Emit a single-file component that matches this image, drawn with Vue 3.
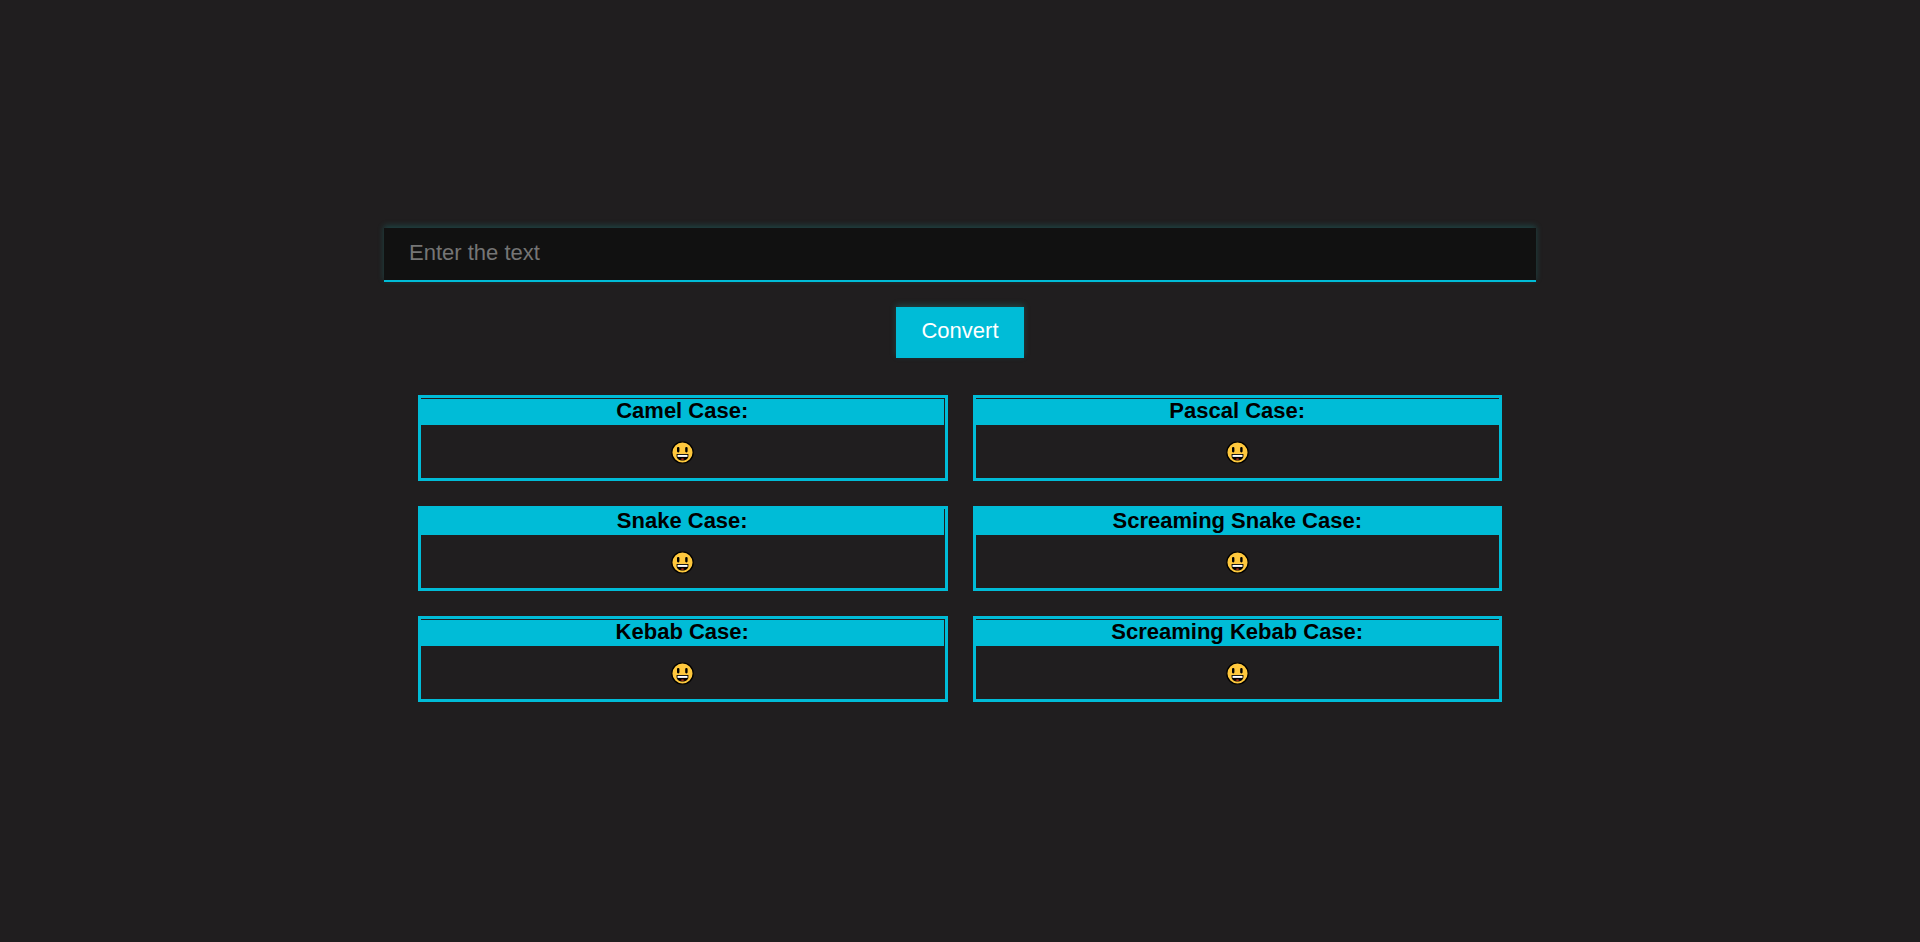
<script setup>
import { ref } from 'vue'

const text = ref('')
const words = ref([])

const cap = (w) => w.charAt(0).toUpperCase() + w.slice(1)
const pascal = (list) => list.map(cap).join('')

const cases = [
  { title: 'Camel Case:', format: (l) => l[0] + pascal(l.slice(1)) },
  { title: 'Pascal Case:', format: pascal },
  { title: 'Snake Case:', format: (l) => l.join('_') },
  { title: 'Screaming Snake Case:', format: (l) => l.join('_').toUpperCase() },
  { title: 'Kebab Case:', format: (l) => l.join('-') },
  { title: 'Screaming Kebab Case:', format: (l) => l.join('-').toUpperCase() }
]

function convert() {
  words.value = text.value.trim().toLowerCase().split(/\s+/).filter(Boolean)
}
</script>

<template>
  <main class="page">
    <form class="form" @submit.prevent="convert">
      <input v-model="text" class="field" type="text" placeholder="Enter the text" aria-label="Enter the text" />
      <button class="convert" type="submit">Convert</button>
    </form>
    <div class="cards">
      <section v-for="item in cases" :key="item.title" class="card">
        <h2 class="title">{{ item.title }}</h2>
        <div class="result">
          <span v-if="words.length">{{ item.format(words) }}</span>
          <svg v-else class="smiley" viewBox="0 0 23 23" role="img" aria-label="Smiley">
            <circle cx="11.5" cy="11.5" r="10.7" fill="#ffc83d" stroke="#000" stroke-width="1.3" />
            <rect x="6" y="6" width="2.4" height="5.4" rx="1.1" fill="#000" />
            <rect x="14.2" y="6" width="2.4" height="5.4" rx="1.1" fill="#000" />
            <path d="M5.6 13h11.8v2c0 2.600-2.300 4.500-5.900 4.500s-5.900-1.900-5.900-4.500z" fill="#000" />
            <path d="M6.500 13.900h10v2h-10z" fill="#fff" />
            <path d="M9.500 18.300c.6-1.200 3.400-1.200 4 0q-2 .7-4 0z" fill="#e83b22" />
          </svg>
        </div>
      </section>
    </div>
  </main>
</template>

<style>
body {
  background: #201e1f;
}
</style>

<style scoped>
.page {
  box-sizing: border-box;
  min-height: 100vh;
  padding-bottom: 12px;
  display: flex;
  flex-direction: column;
  align-items: center;
  justify-content: center;
  gap: 37px;
  font-family: "Liberation Sans", Arial, sans-serif;
  font-size: 22px;
}
.form {
  width: 60%;
  display: flex;
  flex-direction: column;
  align-items: center;
  gap: 25px;
}
.field {
  box-sizing: border-box;
  width: 100%;
  height: 54px;
  padding: 0 25px 2px;
  border: 0;
  border-bottom: 2px solid #00bcd7;
  border-radius: 0;
  outline: 0;
  background: #111;
  color: #fff;
  font: inherit;
  box-shadow: 0 -2px 6px rgba(23, 190, 187, 0.25);
}
.field::placeholder {
  color: #757575;
}
.convert {
  height: 51px;
  padding: 0 25px 3px;
  min-width: 128px;
  border: 0;
  background: #00bcd7;
  color: #fff;
  font: inherit;
  box-shadow: 0 -2px 6px rgba(23, 190, 187, 0.25);
  cursor: pointer;
}
.cards {
  box-sizing: border-box;
  width: 60%;
  padding: 0 34px;
  display: grid;
  grid-template-columns: 1fr 1fr;
  gap: 25px;
}
.card {
  border: 3px solid #00bcd7;
  padding-top: 1px;
  text-align: center;
}
.card:nth-child(3),
.card:nth-child(4) {
  padding-top: 0;
}
.card:nth-child(odd) {
  padding-right: 1px;
}
.title {
  margin: 0;
  padding-bottom: 2px;
  background: #00bcd7;
  color: #000;
  font-size: 22px;
  line-height: 24px;
}
.result {
  box-sizing: border-box;
  min-height: 53px;
  padding-top: 1px;
  display: flex;
  align-items: center;
  justify-content: center;
  color: #fff;
}
.smiley {
  width: 23px;
  height: 23px;
}
</style>
